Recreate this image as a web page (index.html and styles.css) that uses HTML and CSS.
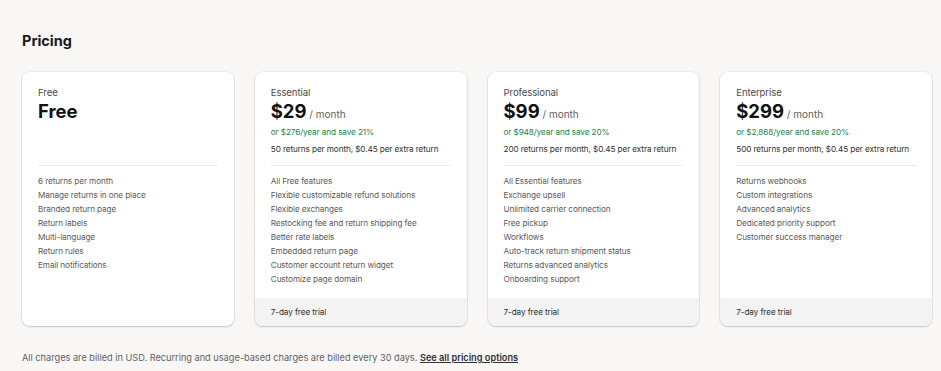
FILE: index.html
```html
<!DOCTYPE html>
<html lang="en">
<head>
  <meta charset="UTF-8">
  <title>Pricing</title>
  <link rel="stylesheet" href="styles.css">
</head>
<body>

  <div class="page">
    <h2 class="page-title">Pricing</h2>

    <div class="plans">
      <div class="plan">
        <div class="plan-head">
          <div class="plan-name">Free</div>
          <div class="plan-price"><span class="amount">Free</span></div>
        </div>
        <ul class="features">
          <li>6 returns per month</li>
          <li>Manage returns in one place</li>
          <li>Branded return page</li>
          <li>Return labels</li>
          <li>Multi-language</li>
          <li>Return rules</li>
          <li>Email notifications</li>
        </ul>
      </div>

      <div class="plan">
        <div class="plan-head">
          <div class="plan-name">Essential</div>
          <div class="plan-price"><span class="amount">$29</span> <span class="period">/ month</span></div>
          <div class="yearly">or $276/year and save 21%</div>
          <div class="usage">50 returns per month, $0.45 per extra return</div>
        </div>
        <ul class="features">
          <li>All Free features</li>
          <li>Flexible customizable refund solutions</li>
          <li>Flexible exchanges</li>
          <li>Restocking fee and return shipping fee</li>
          <li>Better rate labels</li>
          <li>Embedded return page</li>
          <li>Customer account return widget</li>
          <li>Customize page domain</li>
        </ul>
        <div class="trial">7-day free trial</div>
      </div>

      <div class="plan">
        <div class="plan-head">
          <div class="plan-name">Professional</div>
          <div class="plan-price"><span class="amount">$99</span> <span class="period">/ month</span></div>
          <div class="yearly">or $948/year and save 20%</div>
          <div class="usage">200 returns per month, $0.45 per extra return</div>
        </div>
        <ul class="features">
          <li>All Essential features</li>
          <li>Exchange upsell</li>
          <li>Unlimited carrier connection</li>
          <li>Free pickup</li>
          <li>Workflows</li>
          <li>Auto-track return shipment status</li>
          <li>Returns advanced analytics</li>
          <li>Onboarding support</li>
        </ul>
        <div class="trial">7-day free trial</div>
      </div>

      <div class="plan">
        <div class="plan-head">
          <div class="plan-name">Enterprise</div>
          <div class="plan-price"><span class="amount">$299</span> <span class="period">/ month</span></div>
          <div class="yearly">or $2,868/year and save 20%</div>
          <div class="usage">500 returns per month, $0.45 per extra return</div>
        </div>
        <ul class="features">
          <li>Returns webhooks</li>
          <li>Custom integrations</li>
          <li>Advanced analytics</li>
          <li>Dedicated priority support</li>
          <li>Customer success manager</li>
        </ul>
        <div class="trial">7-day free trial</div>
      </div>
    </div>

    <p class="note">All charges are billed in USD. Recurring and usage-based charges are billed every 30 days. <a href="#">See all pricing options</a></p>
  </div>

</body>
</html>
```

FILE: styles.css
```css
body {
  font-family: Inter, 'Liberation Sans', sans-serif;
  background-color: #f8f7f6;
  color: #303030;
  margin: 0;
  padding: 0;
}

.page {
  width: 910px;
  padding: 0 0 0 22px;
}

.page-title {
  margin: 0;
  padding-top: 31px;
  font-size: 14.5px;
  line-height: 20px;
  font-weight: 650;
  color: #1a1a1a;
}

.plans {
  display: grid;
  grid-template-columns: repeat(4, 1fr);
  gap: 21px;
  margin-top: 21px;
}

.plan {
  background: #ffffff;
  border-radius: 8px;
  box-shadow: 0 1px 2px rgba(0,0,0,0.18), 0 0 0 1px rgba(0,0,0,0.04);
  display: flex;
  flex-direction: column;
  overflow: hidden;
  height: 254px;
}

.plan-head {
  margin: 14px 16px 0;
  height: 79px;
  border-bottom: 1px solid #ebebeb;
}

.plan-name {
  font-size: 9.6px;
  line-height: 14px;
  color: #4a4a4a;
  letter-spacing: -0.1px;
}

.plan-price {
  line-height: 29px;
  height: 28px;
  color: #616161;
  font-size: 10px;
}

.plan-price .amount {
  font-size: 18.5px;
  line-height: 1;
  font-weight: 700;
  color: #111;
}

.plan-price .period {
  line-height: 1;
}

.yearly,
.usage,
.features li,
.trial {
  font-size: 8.2px;
  line-height: 14px;
  letter-spacing: -0.1px;
}

.yearly {
  color: #1b7f4c;
  margin-top: -3px;
}

.usage {
  color: #303030;
  margin-top: 3px;
}

.features {
  list-style: none;
  margin: 0;
  padding: 8px 16px 0;
  flex: 1;
}

.features li {
  color: #5a5a5a;
}

.trial {
  background: #f3f3f3;
  padding: 7px 16px;
  color: #303030;
}

.note {
  margin: 25px 0 0;
  font-size: 9.2px;
  line-height: 14px;
  color: #616161;
}

.note a {
  color: #303030;
  font-weight: 600;
  text-decoration: underline;
}
```
